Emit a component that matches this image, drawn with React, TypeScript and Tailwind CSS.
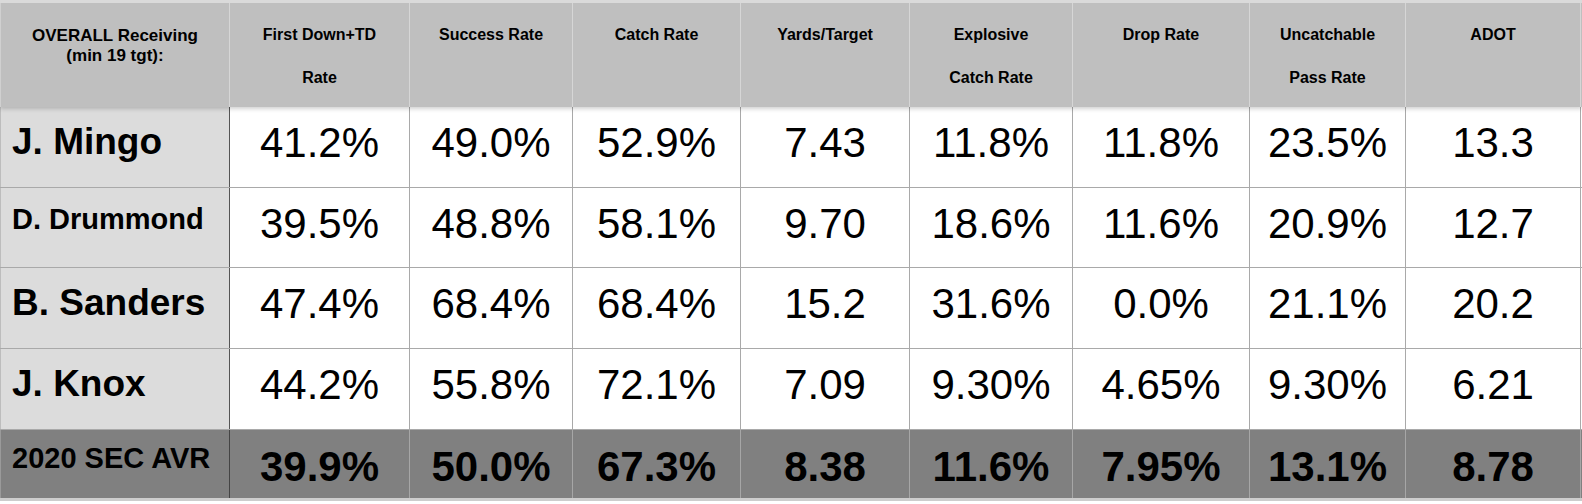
import React from "react";

const cols = "grid grid-cols-[230px_180px_163px_168px_169px_163px_177px_156px_175px]";

type Row = { name: string; small?: boolean; vals: string[] };

const rows: Row[] = [
  { name: "J. Mingo", vals: ["41.2%", "49.0%", "52.9%", "7.43", "11.8%", "11.8%", "23.5%", "13.3"] },
  { name: "D. Drummond", small: true, vals: ["39.5%", "48.8%", "58.1%", "9.70", "18.6%", "11.6%", "20.9%", "12.7"] },
  { name: "B. Sanders", vals: ["47.4%", "68.4%", "68.4%", "15.2", "31.6%", "0.0%", "21.1%", "20.2"] },
  { name: "J. Knox", vals: ["44.2%", "55.8%", "72.1%", "7.09", "9.30%", "4.65%", "9.30%", "6.21"] },
];

const avg = ["39.9%", "50.0%", "67.3%", "8.38", "11.6%", "7.95%", "13.1%", "8.78"];

const headers: string[][] = [
  ["First Down+TD", "Rate"],
  ["Success Rate"],
  ["Catch Rate"],
  ["Yards/Target"],
  ["Explosive", "Catch Rate"],
  ["Drop Rate"],
  ["Uncatchable", "Pass Rate"],
  ["ADOT"],
];

export default function App() {
  return (
    <div className="w-[1582px] h-[504px] bg-white overflow-hidden text-black font-['Liberation_Sans',Arial,sans-serif]">
      {/* header */}
      <div className={`${cols} h-[107px] bg-[#bfbfbf] border-t-[3px] border-t-[#dadada] relative z-10 shadow-[0_2px_4px_rgba(0,0,0,0.18)]`}>
        <div className="border-r border-r-[#d6d6d6] border-l border-l-[#d0d0d0] pt-[23px] text-center font-bold text-[17px] leading-[20px]">
          <div>OVERALL Receiving</div>
          <div>(min 19 tgt):</div>
        </div>
        {headers.map((h, i) => (
          <div key={i} className="border-r border-r-[#d6d6d6] pt-[10px] text-center font-bold text-[16px] leading-[43px]">
            {h.map((l, j) => (
              <div key={j}>{l}</div>
            ))}
          </div>
        ))}
      </div>
      {/* body rows */}
      {rows.map((r, ri) => (
        <div key={ri} className={`${cols} ${ri === 1 ? "h-[80px]" : "h-[81px]"} border-b border-b-[#a9a9a9]`}>
          <div
            className={`bg-[#dcdcdc] border-r border-r-[#555555] border-l border-l-[#bdbdbd] pl-[11px] font-bold leading-none ${
              r.small ? "text-[29px] pt-[17px]" : "text-[37px] pt-[16px]"
            }`}
          >
            {r.name}
          </div>
          {r.vals.map((v, i) => (
            <div key={i} className="border-r border-r-[#a9a9a9] text-center text-[42px] leading-none pt-[15px]">
              {v}
            </div>
          ))}
        </div>
      ))}
      {/* average row */}
      <div className={`${cols} h-[71px] bg-[#808080] border-b-[3px] border-b-[#cdcdcd]`}>
        <div className="border-r border-r-[#444444] border-l border-l-[#9a9a9a] pl-[11px] font-bold text-[29px] leading-none pt-[14px]">
          2020 SEC AVR
        </div>
        {avg.map((v, i) => (
          <div key={i} className="border-r border-r-[#a6a6a6] text-center font-bold text-[42px] leading-none pt-[16px]">
            {v}
          </div>
        ))}
      </div>
    </div>
  );
}
